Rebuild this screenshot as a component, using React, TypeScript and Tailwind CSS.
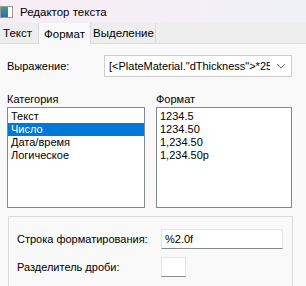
export default function App() {
    const categories = ["Текст", "Число", "Дата/время", "Логическое"];
    const formats = ["1234.5", "1234.50", "1,234.50", "1,234.50р"];

    return (
        <div className="w-[306px] h-[286px] overflow-hidden bg-[#f9f9f9] text-[11px] text-black font-['Liberation_Sans',sans-serif] leading-[14px]">
            {/* title bar */}
            <div className="h-[23px] flex items-center bg-gradient-to-r from-[#f9ecf5] to-[#eff1f7]">
                <div className="w-[13px] h-[12px] border border-[#9a9a9a] bg-white flex">
                    <div className="w-[7px] h-full bg-gradient-to-b from-[#3d9c8c] to-[#2f6fa8]" />
                </div>
                <span className="ml-[7px] text-[11.5px]">Редактор текста</span>
            </div>

            {/* tabs */}
            <div className="h-[21px] bg-[#eeeeee] border-b border-[#dadada] flex items-stretch text-[11.5px]">
                <div className="w-[38px] pl-[3px] flex items-center">Текст</div>
                <div className="w-[53px] -mb-px bg-[#f9f9f9] border-x border-[#dadada] flex items-center justify-center">
                    Формат
                </div>
                <div className="w-[65px] border-r border-[#dadada] flex items-center pl-[2px]">
                    Выделение
                </div>
            </div>

            <div className="pl-[7px]">
                {/* expression */}
                <div className="mt-[11px] flex items-center">
                    <span className="w-[97px]">Выражение:</span>
                    <div className="w-[188px] h-[22px] border border-[#cccccc] bg-white flex items-center pl-[4px] pr-[5px]">
                        <span className="flex-1 overflow-hidden whitespace-nowrap">[&lt;PlateMaterial."dThickness"&gt;*25</span>
                        <svg width="10" height="6" viewBox="0 0 10 6" className="ml-[6px] shrink-0">
                            <path d="M1 1 L5 5 L9 1" fill="none" stroke="#777" strokeWidth="1" />
                        </svg>
                    </div>
                </div>

                {/* lists */}
                <div className="mt-[15px] flex gap-[11px]">
                    <div>
                        <div className="h-[15px]">Категория</div>
                        <div className="w-[138px] h-[101px] border border-[#828790] bg-white py-[2px]">
                            {categories.map((c) => (
                                <div
                                    key={c}
                                    className={
                                        c === "Число"
                                            ? "h-[13px] leading-[13px] pl-[3px] bg-[#0078d7] text-white"
                                            : "h-[13px] leading-[13px] pl-[3px]"
                                    }
                                >
                                    {c}
                                </div>
                            ))}
                        </div>
                    </div>
                    <div>
                        <div className="h-[15px]">Формат</div>
                        <div className="w-[136px] h-[101px] border border-[#828790] bg-white py-[2px]">
                            {formats.map((f) => (
                                <div key={f} className="h-[13px] leading-[13px] pl-[3px]">
                                    {f}
                                </div>
                            ))}
                        </div>
                    </div>
                </div>

                {/* group */}
                <div className="mt-[8px] ml-px w-[285px] h-[80px] border border-[#dcdcdc] pl-[8px] pt-[12px]">
                    <div className="flex items-center">
                        <span className="w-[144px] whitespace-nowrap">Строка форматирования:</span>
                        <div className="w-[122px] h-[20px] bg-white border border-[#e5e5e5] border-b-[#8a8a8a] flex items-center pl-[3px]">
                            %2.0f
                        </div>
                    </div>
                    <div className="mt-[8px] flex items-center">
                        <span className="w-[144px] whitespace-nowrap">Разделитель дроби:</span>
                        <div className="w-[25px] h-[20px] bg-white border border-[#e5e5e5] border-b-[#8a8a8a]" />
                    </div>
                </div>
            </div>
        </div>
    );
}
